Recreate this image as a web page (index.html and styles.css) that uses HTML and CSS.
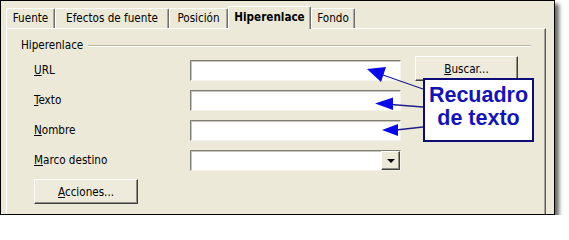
FILE: index.html
```html
<!DOCTYPE html>
<html lang="es">
<head>
<meta charset="utf-8">
<title>Hiperenlace</title>
<link rel="stylesheet" href="styles.css">
</head>
<body>
<div class="frame">
  <div class="tabs">
    <div class="tab w-fuente">Fuente</div>
    <div class="tab w-efectos">Efectos de fuente</div>
    <div class="tab w-posicion">Posición</div>
    <div class="tab tab-active w-hiper">Hiperenlace</div>
    <div class="tab w-fondo">Fondo</div>
  </div>
  <div class="panel">
    <div class="group-head"><span class="group-title">Hiperenlace</span><span class="rule"></span></div>
    <div class="form">
      <label class="lbl"><u>U</u>RL</label>
      <div class="field"></div>
      <button class="btn btn-buscar" type="button"><u>B</u>uscar...</button>

      <label class="lbl"><u>T</u>exto</label>
      <div class="field"></div>
      <span></span>

      <label class="lbl"><u>N</u>ombre</label>
      <div class="field"></div>
      <span></span>

      <label class="lbl"><u>M</u>arco destino</label>
      <div class="field combo"><span class="drop"><span class="tri"></span></span></div>
      <span></span>
    </div>
    <button class="btn btn-acciones" type="button"><u>A</u>cciones...</button>
  </div>

  <div class="callout">Recuadro<br>de texto</div>

  <svg class="arrows" width="569" height="231" viewBox="0 0 569 231">
    <line x1="383" y1="75" x2="423" y2="89" class="ln"/>
    <polygon points="367,69 386,67 381,82" class="hd"/>
    <line x1="391" y1="104.5" x2="423" y2="107" class="ln"/>
    <polygon points="375,103.5 393,97.5 393,110" class="hd"/>
    <line x1="396" y1="130" x2="423" y2="127" class="ln"/>
    <polygon points="382,130 398,124 398,136" class="hd"/>
  </svg>
</div>
</body>
</html>
```

FILE: styles.css
```css
html, body {
  margin: 0;
  padding: 0;
  background: #ffffff;
}

body {
  font-family: "DejaVu Sans Condensed", "DejaVu Sans", sans-serif;
  font-stretch: condensed;
  font-size: 11.6px;
  color: #000;
}

.frame {
  position: relative;
  width: 553px;
  height: 213px;
  border: 1px solid #000;
  background: #ECE9D8;
  box-shadow: 4px 4px 4px rgba(0, 0, 0, 0.6);
  overflow: hidden;
}

/* ---------- tabs ---------- */
.tabs {
  display: flex;
  align-items: flex-end;
  height: 22px;
  margin: 5px 0 0 5px;
  position: relative;
  z-index: 2;
}

.tab {
  box-sizing: border-box;
  height: 20px;
  line-height: 18px;
  text-align: center;
  border-top: 1px solid #ffffff;
  border-left: 1px solid #ffffff;
  border-right: 1px solid #6f6f6f;
  box-shadow: inset -1px 0 0 #a8a69c;
  border-radius: 2px 2px 0 0;
  white-space: nowrap;
}

.tab-active {
  height: 23px;
  margin-bottom: -1px;
  line-height: 20px;
  font-weight: bold;
  background: #ECE9D8;
}

.w-fuente { width: 49px; }
.w-efectos { width: 114px; }
.w-posicion { width: 59px; }
.w-hiper { width: 83px; }
.w-fondo { width: 44px; }

/* ---------- panel ---------- */
.panel {
  box-sizing: border-box;
  width: 540px;
  height: 220px;
  margin-left: 5px;
  border-top: 1px solid #ffffff;
  border-left: 1px solid #ffffff;
  border-right: 1px solid #5a5a5a;
  box-shadow: inset -1px 0 0 #a8a69c;
  position: relative;
  z-index: 1;
}

.group-head {
  display: flex;
  align-items: center;
  height: 13px;
  margin: 10px 14px 0 14px;
}

.group-title {
  line-height: 13px;
}

.rule {
  flex: 1;
  margin-left: 5px;
  height: 0;
  border-top: 1px solid #b8b5a6;
  border-bottom: 1px solid #ffffff;
}

.form {
  display: grid;
  grid-template-columns: 156px 211px 117px;
  row-gap: 9px;
  margin: 4px 0 0 27px;
}

.lbl {
  align-self: end;
  height: 21px;
  line-height: 21px;
}

.field {
  align-self: end;
  box-sizing: border-box;
  height: 21px;
  background: #ffffff;
  border: 1px solid;
  border-color: #7f7f7a #f4f3ee #f4f3ee #7f7f7a;
  box-shadow: inset 1px 1px 0 #c8c5b8;
  position: relative;
}

.combo {
  display: flex;
  justify-content: flex-end;
  align-items: center;
}

.drop {
  box-sizing: border-box;
  width: 19px;
  height: 19px;
  background: #ECE9D8;
  border-top: 1px solid #ffffff;
  border-left: 1px solid #ffffff;
  border-right: 1px solid #404040;
  border-bottom: 1px solid #404040;
  box-shadow: inset -1px -1px 0 #8f8d84;
  display: flex;
  align-items: center;
  justify-content: center;
}

.tri {
  width: 0;
  height: 0;
  border-left: 4px solid transparent;
  border-right: 4px solid transparent;
  border-top: 4px solid #000;
  margin-top: 1px;
}

.btn {
  box-sizing: border-box;
  font: inherit;
  color: #000;
  background: #EEEBDD;
  border-top: 1px solid #ffffff;
  border-left: 1px solid #ffffff;
  border-right: 1px solid #404040;
  border-bottom: 1px solid #404040;
  box-shadow: inset -1px -1px 0 #8f8d84;
  height: 25px;
  padding: 0;
  text-align: center;
}

.btn-buscar {
  width: 103px;
  margin-left: 14px;
}

.btn-acciones {
  display: block;
  width: 104px;
  margin: 8px 0 0 27px;
}

/* ---------- annotation ---------- */
.callout {
  position: absolute;
  left: 422px;
  top: 77px;
  width: 111px;
  height: 64px;
  box-sizing: border-box;
  border: 2px solid #0c0c78;
  background: #ffffff;
  font-family: "Liberation Sans", Arial, sans-serif;
  font-stretch: normal;
  font-weight: bold;
  font-size: 21.5px;
  line-height: 23px;
  color: #1414b4;
  text-align: center;
  padding-top: 4px;
  z-index: 5;
}

.arrows {
  position: absolute;
  left: -1px;
  top: -1px;
  z-index: 6;
  pointer-events: none;
}

.ln {
  stroke: #1e1e8a;
  stroke-width: 1.3;
}

.hd {
  fill: #0a0ae6;
}
```
